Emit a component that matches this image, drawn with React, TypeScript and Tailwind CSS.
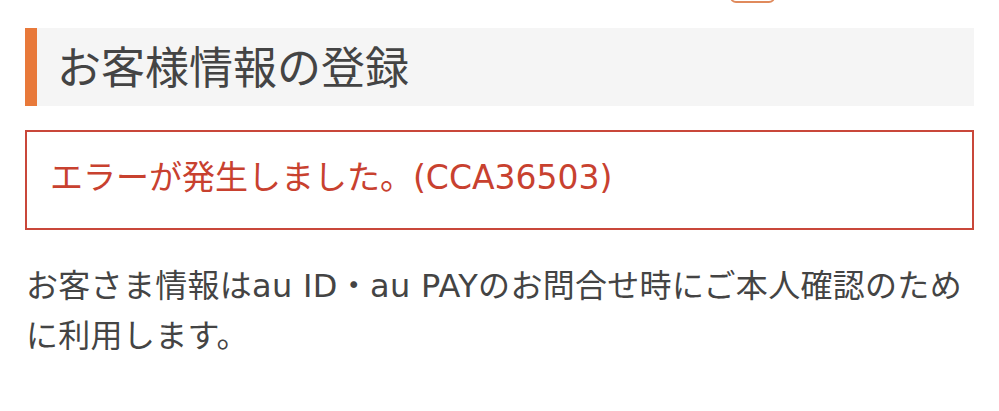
import React from "react";

export default function App() {
  const font = {
    fontFamily:
      '"DejaVu Sans", "Noto Sans CJK JP", "Noto Sans", sans-serif',
  };
  return (
    <div className="w-[999px] h-[411px] bg-white overflow-hidden" style={font}>
      <div className="h-[28px] overflow-hidden">
        <div className="ml-[730px] -mt-[17px] w-[45px] h-[20px] rounded-[6px] border-2 border-[#e08a5c] bg-white" />
      </div>
      <div className="mx-[25px]">
        <div className="flex h-[78px] bg-[#f5f5f5]">
          <div className="w-[12px] bg-[#e8793a]" />
          <h1
            className="flex items-center pl-[20px] pb-[5px] text-[44px] leading-none font-normal text-[#444444]"
            style={{ fontFamily: '"Noto Sans CJK JP", sans-serif' }}
          >
            お客様情報の登録
          </h1>
        </div>
        <div className="mt-[24px] h-[100px] border-2 border-[#c9473a] flex items-center pl-[23px] pb-[6px]">
          <p className="text-[33px] leading-none font-normal text-[#c8412f]">
            エラーが発生しました。(CCA36503)
          </p>
        </div>
        <p className="mt-[31px] pl-[1px] text-[32px] tracking-[0.3px] leading-[50px] font-normal text-[#444444]">
          お客さま情報はau ID・au PAYのお問合せ時にご本人確認のために利用します。
        </p>
      </div>
    </div>
  );
}
